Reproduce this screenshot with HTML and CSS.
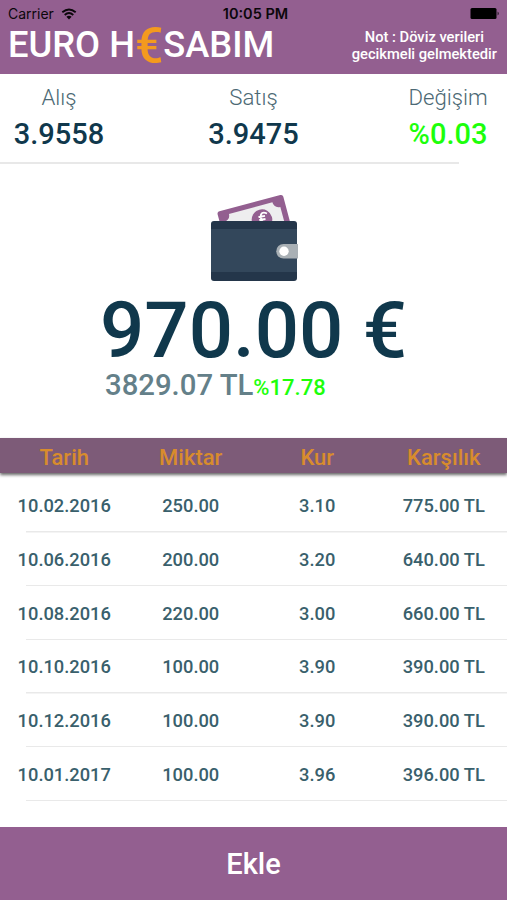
FILE: index.html
```html
<!DOCTYPE html>
<html lang="tr">
<head>
  <meta charset="UTF-8" />
  <meta name="viewport" content="width=device-width, initial-scale=1.0"/>
  <title>Euro Hesabım</title>
  <link rel="stylesheet" href="styles.css">
</head>
<body>

  <header class="header">
    <div class="status-bar">
      <div class="carrier">
        <span>Carrier</span>
        <svg class="wifi" viewBox="0 0 16 12" width="16" height="12">
          <path d="M1.3 4.3Q8 -1.4 14.7 4.3M3.7 6.9Q8 3.3 12.3 6.9" fill="none" stroke="#0b070b" stroke-width="1.9"/>
          <path d="M5.4 8.7Q8 6.6 10.6 8.7L8 11.4Z" fill="#0b070b"/>
        </svg>
      </div>
      <div class="time">10:05 PM</div>
      <div class="battery">
        <svg viewBox="0 0 31 13" width="31" height="13">
          <rect x="1.5" y="1" width="26" height="11" rx="1.5" fill="#000"/>
          <path d="M28.7 4.5Q30.6 6.5 28.7 8.5Z" fill="#000"/>
        </svg>
      </div>
    </div>
    <div class="title-row">
      <h1>EURO H<span class="euro">€</span>SABIM</h1>
      <p class="note">Not : Döviz verileri<br>gecikmeli gelmektedir</p>
    </div>
  </header>

  <section class="rates">
    <div class="rate"><span>Alış</span><strong>3.9558</strong></div>
    <div class="rate"><span>Satış</span><strong>3.9475</strong></div>
    <div class="rate"><span>Değişim</span><strong class="up">%0.03</strong></div>
  </section>

  <section class="wallet">
    <svg class="wallet-icon" viewBox="0 0 90 88" width="90" height="88">
      <!-- banknote -->
      <g transform="rotate(-15 7 19)">
        <rect x="7" y="19" width="68" height="38" rx="2.5" fill="#935f90"/>
        <path d="M18 24H63Q63 30 69.500 30.500V52H11V30.500Q18 30 18 24Z" fill="#eeeeef"/>
        <circle cx="48.500" cy="38" r="10.300" fill="#935f90"/>
      </g>
      <path d="M57 20.500Q52.500 18.500 51 21.500Q49.800 24.500 52.500 28M48.500 24L55 22.800M49.300 27L55.500 26" fill="none" stroke="#fff" stroke-width="1.8"/>
      <!-- wallet body -->
      <rect x="1" y="28" width="86" height="60" rx="3" fill="#24364a"/>
      <path d="M1 36H87V79H1Z" fill="#33475b"/>
      <path d="M73.500 51H88V65.500H73.500A7.250 7.250 0 0 1 73.500 51Z" fill="#a9b0b5"/>
      <circle cx="74" cy="58.200" r="4.700" fill="#fff"/>
    </svg>
    <div class="total">970.00 €</div>
    <div class="value">3829.07 TL<span>%17.78</span></div>
  </section>

  <div class="row table-head">
    <span>Tarih</span><span>Miktar</span><span>Kur</span><span>Karşılık</span>
  </div>
  <main class="table-body">
    <div class="row"><span>10.02.2016</span><span>250.00</span><span>3.10</span><span>775.00 TL</span></div>
    <div class="row"><span>10.06.2016</span><span>200.00</span><span>3.20</span><span>640.00 TL</span></div>
    <div class="row"><span>10.08.2016</span><span>220.00</span><span>3.00</span><span>660.00 TL</span></div>
    <div class="row"><span>10.10.2016</span><span>100.00</span><span>3.90</span><span>390.00 TL</span></div>
    <div class="row"><span>10.12.2016</span><span>100.00</span><span>3.90</span><span>390.00 TL</span></div>
    <div class="row"><span>10.01.2017</span><span>100.00</span><span>3.96</span><span>396.00 TL</span></div>
  </main>

  <button class="add-btn">Ekle</button>

</body>
</html>
```

FILE: styles.css
```css
* {
  box-sizing: border-box;
}

body {
  margin: 0;
  height: 900px;
  display: flex;
  flex-direction: column;
  overflow: hidden;
  background: #fff;
  font-family: Roboto, sans-serif;
  font-weight: 500;
  color: #10384c;
}

.header {
  height: 74px;
  background: #935f90;
  color: #fff;
}

.status-bar {
  display: grid;
  grid-template-columns: 1fr auto 1fr;
  align-items: center;
  height: 27px;
  padding: 0 7px 0 8px;
  font-family: Inter, sans-serif;
  font-size: 14px;
  color: #0b070b;
}

.carrier {
  display: flex;
  align-items: center;
  gap: 7px;
  font-weight: 400;
}

.time {
  padding-left: 3px;
  font-size: 14.5px;
  font-weight: 600;
}

.battery {
  display: flex;
  justify-content: flex-end;
}

.title-row {
  display: flex;
  justify-content: space-between;
  height: 47px;
  padding: 0 10px 0 8px;
}

h1 {
  margin: 0;
  font-size: 36.3px;
  font-weight: 500;
  line-height: 36px;
  white-space: nowrap;
}

.euro {
  color: #f39a1e;
  font-size: 50px;
  line-height: 0;
  vertical-align: -6px;
}

.note {
  margin: 2px 0 0;
  font-size: 14.7px;
  line-height: 17px;
  text-align: center;
}

.rates {
  display: flex;
  justify-content: space-between;
  height: 88px;
  padding-top: 9px;
}

.rate {
  width: 118px;
  text-align: center;
}

.rate span {
  display: block;
  font-size: 22.2px;
  font-weight: 300;
  line-height: 28px;
  color: #4c6974;
}

.rate strong {
  display: block;
  font-size: 29px;
  font-weight: 500;
  line-height: 47px;
}

.rate .up {
  color: #1dff0b;
}

.wallet {
  height: 276px;
}

.wallet::before {
  content: "";
  display: block;
  width: 459px;
  height: 2px;
  background: #e8e8e8;
}

.wallet-icon {
  display: block;
  margin: 29px auto 0 210px;
}

.total {
  margin-top: 9px;
  padding-left: 100px;
  font-size: 78px;
  line-height: 81px;
  white-space: nowrap;
}

.value {
  padding-left: 105px;
  font-size: 29.3px;
  line-height: 28px;
  color: #648089;
}

.value span {
  font-size: 22px;
  color: #1dff0b;
}

.row {
  display: grid;
  grid-template-columns: repeat(4, 1fr);
  align-items: center;
  text-align: center;
}

.table-head {
  height: 35px;
  padding: 3px 0 0 1px;
  background: #7d5b78;
  box-shadow: 0 2px 3px rgba(0, 0, 0, 0.6);
  font-size: 22px;
  color: #d88c2d;
}

.table-body {
  height: 354px;
  padding-top: 6px;
}

.table-body .row {
  height: 53.7px;
  padding-left: 1px;
  font-size: 18.3px;
  color: #39606c;
  background: linear-gradient(#e9e9e9, #e9e9e9) 26px 100% / 100% 1.5px no-repeat;
}

.add-btn {
  height: 73px;
  border: none;
  background: #935f90;
  color: #fff;
  font-family: inherit;
  font-size: 29px;
  font-weight: 500;
}
```
